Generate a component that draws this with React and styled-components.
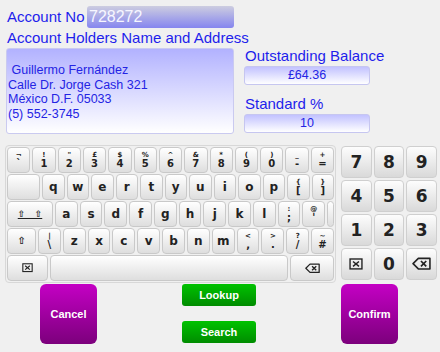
import React from 'react'
import styled, { createGlobalStyle } from 'styled-components'

const GlobalStyle = createGlobalStyle`
  html, body { margin: 0; padding: 0; background: #f0f0f0; }
  body { font-family: "Liberation Sans", Arial, sans-serif; }
`;

const Screen = styled.div`
  width: 440px;
  height: 352px;
  overflow: hidden;
  background: #f0f0f0;
  display: flex;
  flex-direction: column;
`;

const Top = styled.div`
  display: flex;
  gap: 10px;
  padding: 6px 0 0 6px;
  height: 128px;
`;

const LeftCol = styled.div`
  width: 228px;
  display: flex;
  flex-direction: column;
`;

const AccountRow = styled.div`
  display: flex;
  align-items: center;
  justify-content: space-between;
  height: 22px;
`;

const Label = styled.div`
  font-size: 15px;
  line-height: 20px;
  height: 20px;
  color: #1e1eec;
  padding-left: 1px;
  white-space: nowrap;
  margin-top: ${p => p.$mt || 0}px;
`;

const AccountInput = styled.div`
  width: 147px;
  height: 22px;
  box-sizing: border-box;
  border-radius: 3px;
  background: linear-gradient(#cdcde0, #8585ef);
  color: #f6f6ff;
  font-size: 16px;
  line-height: 22px;
  padding-left: 2px;
`;

const AddressBox = styled.div`
  height: 86px;
  box-sizing: border-box;
  border: 1px solid #cacaf0;
  border-radius: 3px;
  background: linear-gradient(#b2b2ff, #ffffff);
  display: flex;
  flex-direction: column;
  justify-content: center;
  padding: 2px 1px 0;
  font-size: 12.5px;
  line-height: 14.5px;
  color: #2424e4;
  white-space: pre;
`;

const RightCol = styled.div`
  width: 126px;
  padding-top: 40px;
  display: flex;
  flex-direction: column;
`;

const ValueBox = styled.div`
  height: 19px;
  box-sizing: border-box;
  border: 1px solid #c6c6f0;
  border-radius: 3px;
  background: linear-gradient(#c2c2ff, #ffffff);
  text-align: center;
  font-size: 12.5px;
  line-height: 17px;
  color: #2424e4;
`;

const KeyboardArea = styled.div`
  display: flex;
  gap: 5px;
  margin-top: 11px;
  padding-left: 5px;
`;

const MainKeys = styled.div`
  width: 331px;
  box-sizing: border-box;
  border: 1px solid #d8d8d8;
  border-radius: 4px;
  padding: 1px;
  display: flex;
  flex-direction: column;
  gap: 1px;
`;

const KeyRow = styled.div`
  display: flex;
  gap: 2px;
  height: 26px;
`;

const Key = styled.div`
  ${p => (p.$w ? `width: ${p.$w}px; flex: none;` : 'flex: 1;')}
  box-sizing: border-box;
  border: 1px solid #c9c9c9;
  border-radius: 4px;
  background: linear-gradient(#ffffff, #dedede);
  display: flex;
  flex-direction: column;
  align-items: center;
  justify-content: center;
  font-family: "DejaVu Sans", Verdana, sans-serif;
  font-weight: bold;
  font-size: 12px;
  line-height: 1;
  color: #222;
`;

const Shifted = styled.span`
  font-size: 7px;
  line-height: 8px;
`;

const Plain = styled.span`
  font-size: 10px;
  line-height: 10px;
`;

const CapsText = styled.span`
  font-size: 9px;
  text-decoration: underline;
  white-space: pre;
`;

const NumPad = styled.div`
  width: 96px;
  display: grid;
  grid-template-columns: repeat(3, 1fr);
  grid-template-rows: repeat(4, 32px);
  gap: 2px;
  margin-top: 1px;
`;

const NumKey = styled(Key)`
  font-size: 17px;
  border-color: #cfcfcf;
  background: linear-gradient(#fdfdfd, #d9d9d9);
`;

const Bottom = styled.div`
  display: flex;
  align-items: flex-start;
  gap: 85px;
  padding-left: 40px;
  margin-top: 1px;
`;

const BigButton = styled.div`
  width: 57px;
  height: 60px;
  border-radius: 6px;
  background: linear-gradient(#c400c4, #7c007c);
  color: #fff;
  display: flex;
  align-items: center;
  justify-content: center;
  font-weight: bold;
  font-size: 11px;
`;

const MiddleCol = styled.div`
  width: 74px;
  display: flex;
  flex-direction: column;
  gap: 15px;
`;

const GreenButton = styled.div`
  height: 22px;
  border-radius: 3px;
  background: linear-gradient(#00c200, #008c00);
  color: #fff;
  display: flex;
  align-items: center;
  justify-content: center;
  font-weight: bold;
  font-size: 11px;
`;

const ClearIcon = ({ size = 12 }) => (
  <svg width={size} height={size * 0.85} viewBox="0 0 14 12">
    <rect x="1" y="1" width="12" height="10" fill="none" stroke="#222" strokeWidth="1.4" />
    <path d="M4 3.5 L10 8.5 M10 3.5 L4 8.5" stroke="#222" strokeWidth="1.5" />
  </svg>
);

const BackIcon = ({ size = 15 }) => (
  <svg width={size} height={size * 0.7} viewBox="0 0 18 12">
    <path d="M6 1 H17 V11 H6 L1 6 Z" fill="none" stroke="#222" strokeWidth="1.5" strokeLinejoin="round" />
    <path d="M8.5 3.5 L13.5 8.5 M13.5 3.5 L8.5 8.5" stroke="#222" strokeWidth="1.6" />
  </svg>
);

const Dual = ({ top, bottom }) => (
  <Key>
    <Shifted>{top}</Shifted>
    <Plain>{bottom}</Plain>
  </Key>
);

const numberRow = [
  ['¬', '`'], ['!', '1'], ['"', '2'], ['£', '3'], ['$', '4'], ['%', '5'], ['^', '6'],
  ['&', '7'], ['*', '8'], ['(', '9'], [')', '0'], ['_', '-'], ['+', '='],
];

const App = () => {
  return (
    <Screen>
      <GlobalStyle />
      <Top>
        <LeftCol>
          <AccountRow>
            <Label>Account No</Label>
            <AccountInput>728272</AccountInput>
          </AccountRow>
          <Label>Account Holders Name and Address</Label>
          <AddressBox>
            <div> Guillermo Fernández</div>
            <div>Calle Dr. Jorge Cash 321</div>
            <div>México D.F. 05033</div>
            <div>(5) 552-3745</div>
          </AddressBox>
        </LeftCol>
        <RightCol>
          <Label>Outstanding Balance</Label>
          <ValueBox>£64.36</ValueBox>
          <Label $mt={9}>Standard %</Label>
          <ValueBox>10</ValueBox>
        </RightCol>
      </Top>

      <KeyboardArea>
        <MainKeys>
          <KeyRow>
            {numberRow.map(([t, b]) => <Dual key={b} top={t} bottom={b} />)}
          </KeyRow>
          <KeyRow>
            <Key $w={33} />
            {'qwertyuiop'.split('').map(c => <Key key={c}>{c}</Key>)}
            <Dual top="{" bottom="[" />
            <Dual top="}" bottom="]" />
          </KeyRow>
          <KeyRow>
            <Key $w={46}><CapsText>{'⇧   ⇧'}</CapsText></Key>
            {'asdfghjkl'.split('').map(c => <Key key={c}>{c}</Key>)}
            <Dual top=":" bottom=";" />
            <Dual top="@" bottom="'" />
            <Key $w={7} />
          </KeyRow>
          <KeyRow>
            <Key $w={29}><Plain>⇧</Plain></Key>
            <Dual top="|" bottom="\" />
            {'zxcvbnm'.split('').map(c => <Key key={c}>{c}</Key>)}
            <Dual top="<" bottom="," />
            <Dual top=">" bottom="." />
            <Dual top="?" bottom="/" />
            <Dual top="~" bottom="#" />
          </KeyRow>
          <KeyRow>
            <Key $w={41}><ClearIcon size={11} /></Key>
            <Key />
            <Key $w={44}><BackIcon size={15} /></Key>
          </KeyRow>
        </MainKeys>

        <NumPad>
          {['7', '8', '9', '4', '5', '6', '1', '2', '3'].map(n => <NumKey key={n}>{n}</NumKey>)}
          <NumKey><ClearIcon size={14} /></NumKey>
          <NumKey>0</NumKey>
          <NumKey><BackIcon size={19} /></NumKey>
        </NumPad>
      </KeyboardArea>

      <Bottom>
        <BigButton>Cancel</BigButton>
        <MiddleCol>
          <GreenButton>Lookup</GreenButton>
          <GreenButton>Search</GreenButton>
        </MiddleCol>
        <BigButton>Confirm</BigButton>
      </Bottom>
    </Screen>
  )
}

export default App
